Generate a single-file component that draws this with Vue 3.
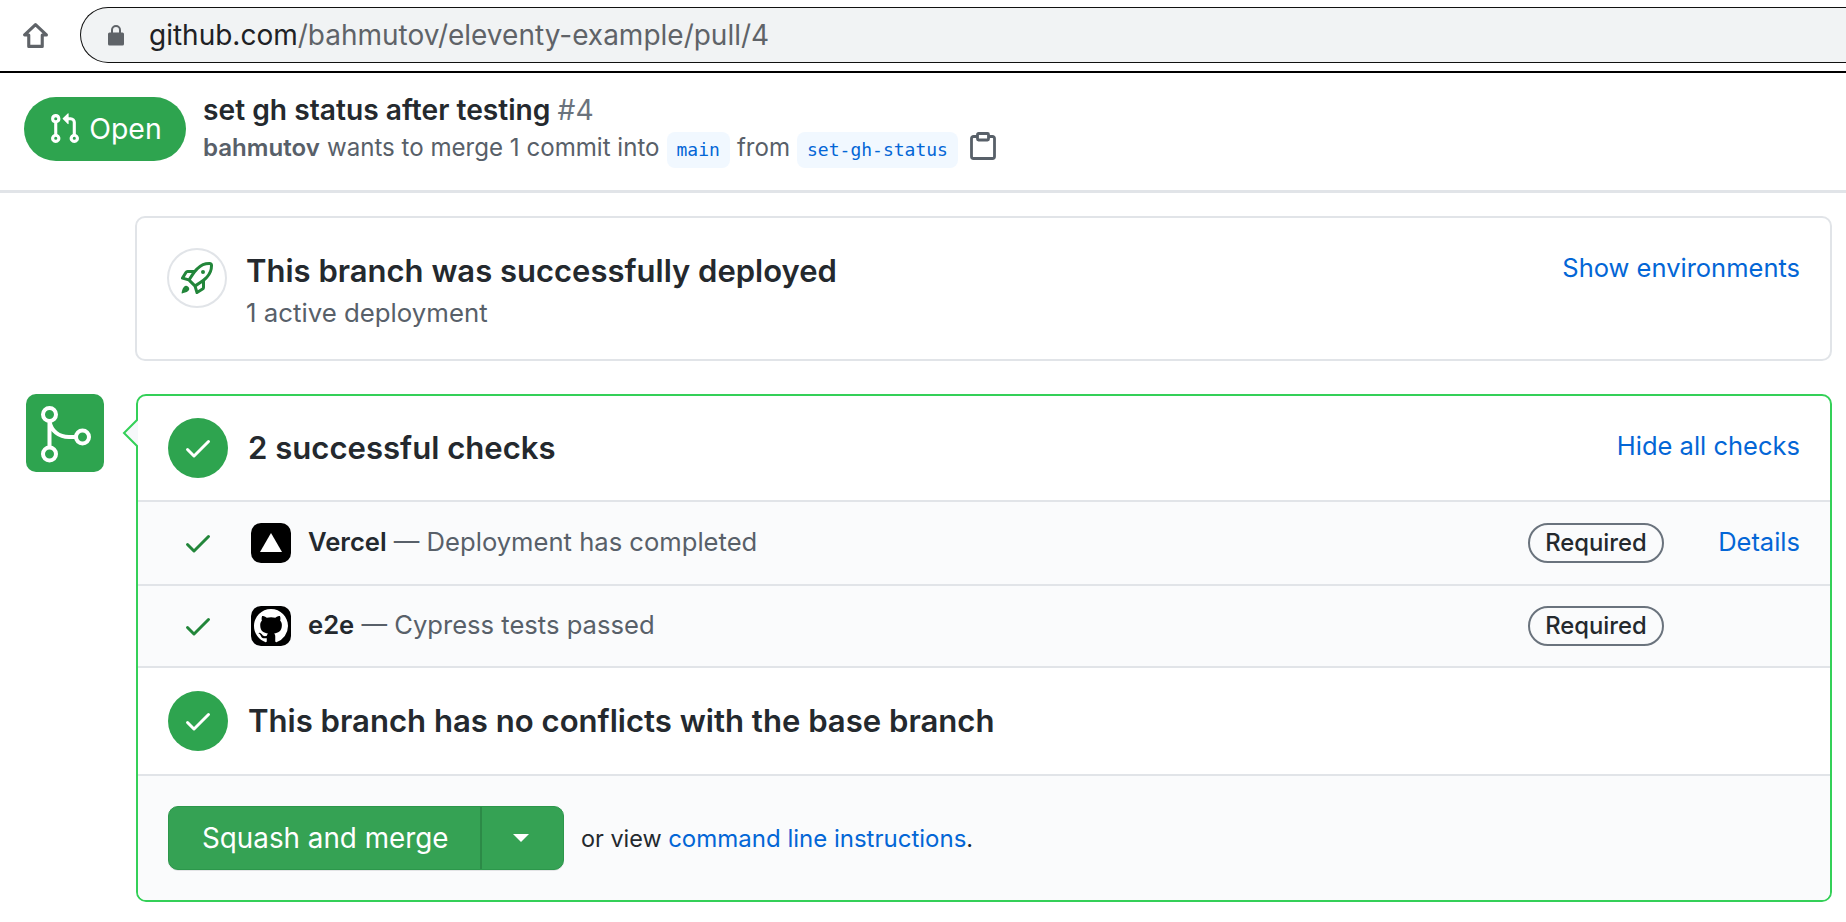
<script setup>
const checkPath = 'M13.78 4.22a.75.75 0 010 1.06l-7.25 7.25a.75.75 0 01-1.06 0L2.22 9.28a.75.75 0 011.06-1.06L6 10.94l6.72-6.72a.75.75 0 011.06 0z'
const githubPath = 'M8 0C3.58 0 0 3.58 0 8c0 3.54 2.29 6.53 5.47 7.59.4.07.55-.17.55-.38 0-.19-.01-.82-.01-1.49-2.01.37-2.53-.49-2.69-.94-.09-.23-.48-.94-.82-1.13-.28-.15-.68-.52-.01-.53.63-.01 1.08.58 1.23.82.72 1.21 1.87.87 2.33.66.07-.52.28-.87.51-1.07-1.78-.2-3.64-.89-3.64-3.95 0-.87.31-1.59.82-2.15-.08-.2-.36-1.02.08-2.12 0 0 .67-.21 2.2.82.64-.18 1.32-.27 2-.27.68 0 1.36.09 2 .27 1.53-1.04 2.2-.82 2.2-.82.44 1.1.16 1.92.08 2.12.51.56.82 1.27.82 2.15 0 3.07-1.87 3.75-3.65 3.95.29.25.54.73.54 1.48 0 1.07-.01 1.93-.01 2.2 0 .21.15.46.55.38A8.013 8.013 0 0016 8c0-4.42-3.58-8-8-8z'

const checks = [
  { id: 'vercel', name: 'Vercel', text: 'Deployment has completed', details: true },
  { id: 'e2e', name: 'e2e', text: 'Cypress tests passed', details: false },
]
</script>

<template>
  <div class="page">
    <div class="toolbar">
      <svg class="home" viewBox="0 0 26 26" fill="none" stroke="#5f6368" stroke-width="3" stroke-linejoin="round">
        <path d="M13 2.500 2.500 12.500H6.500V23.500H19.500V12.500H23.500Z" />
      </svg>
      <div class="url">
        <svg class="lock" viewBox="0 0 18 22" fill="#5f6368">
          <path d="M2.500 8.500H4V6a5 5 0 0 1 10 0v2.500h1.500A1.500 1.500 0 0 1 17 10v10a1.500 1.500 0 0 1-1.500 1.500h-13A1.500 1.500 0 0 1 1 20V10a1.500 1.500 0 0 1 1.500-1.500ZM6 8.500h6V6a3 3 0 0 0-6 0Z" />
        </svg>
        <span class="host">github.com</span><span class="path">/bahmutov/eleventy-example/pull/4</span>
      </div>
    </div>

    <div class="pr-head">
      <div class="state">
        <svg class="state-icon" viewBox="0 0 16 16" fill="#fff" fill-rule="evenodd">
          <path d="M7.177 3.073L9.573.677A.25.25 0 0110 .854v4.792a.25.25 0 01-.427.177L7.177 3.427a.25.25 0 010-.354zM3.750 2.500a.75.75 0 100 1.500.75.75 0 000-1.500zm-2.250.75a2.250 2.250 0 113 2.122v5.256a2.251 2.251 0 11-1.500 0V5.372A2.250 2.250 0 011.500 3.250zM11 2.500h-1V4h1a1 1 0 011 1v5.628a2.251 2.251 0 101.500 0V5A2.500 2.500 0 0011 2.500zm1 10.250a.75.75 0 111.500 0 .75.75 0 01-1.500 0zM3.750 12a.75.75 0 100 1.500.75.75 0 000-1.500z" />
        </svg>
        Open
      </div>
      <div class="pr-text">
        <div class="pr-title">set gh status after testing <span class="pr-num">#4</span></div>
        <div class="pr-sub">
          <strong>bahmutov</strong> wants to merge 1 commit into
          <span class="ref">main</span> from
          <span class="ref">set-gh-status</span>
          <svg class="clip" viewBox="0 0 26 28" fill="none" stroke="#586069" stroke-width="2.800" stroke-linejoin="round">
            <path d="M7 4.500H3.500A2 2 0 0 0 1.500 6.500V24.500A2 2 0 0 0 3.500 26.500H22.500A2 2 0 0 0 24.500 24.500V6.500A2 2 0 0 0 22.500 4.500H19" />
            <rect x="7.500" y="1.500" width="11" height="6.500" rx="1" />
          </svg>
        </div>
      </div>
    </div>

    <div class="deploy">
      <div class="rocket">
        <svg viewBox="0 0 16 16" fill="#22863a" fill-rule="evenodd" width="32" height="32">
          <path d="M14.064 0a8.750 8.750 0 00-6.187 2.563l-.459.458c-.314.314-.616.641-.904.979H3.310a1.750 1.750 0 00-1.490.833L.11 7.607a.75.75 0 00.418 1.110l3.102.954c.037.051.079.1.124.145l2.429 2.428c.046.046.094.088.145.125l.954 3.102a.75.75 0 001.110.418l2.774-1.707a1.750 1.750 0 00.833-1.490V9.485c.338-.288.665-.59.979-.904l.458-.459A8.750 8.750 0 0016 1.936V1.750A1.750 1.750 0 0014.250 0h-.186zM10.500 10.625c-.088.06-.177.118-.266.175l-2.350 1.521.548 1.783 1.949-1.200a.25.25 0 00.119-.213v-2.066zM3.678 8.116L5.200 5.766c.058-.09.117-.178.176-.266H3.309a.25.25 0 00-.213.119l-1.200 1.950 1.782.547zm5.260-4.493A7.250 7.250 0 0114.063 1.500h.186a.25.25 0 01.25.25v.186a7.250 7.250 0 01-2.123 5.127l-.459.458a15.210 15.210 0 01-2.499 2.020l-2.317 1.500-2.143-2.143 1.500-2.317a15.250 15.250 0 012.020-2.500l.458-.458h.002zM12 5a1 1 0 11-2 0 1 1 0 012 0zm-8.440 9.560a1.500 1.500 0 10-2.120-2.120c-.734.730-1.047 2.332-1.150 3.003a.23.23 0 00.265.265c.671-.103 2.273-.416 3.005-1.148z" />
        </svg>
      </div>
      <div class="deploy-text">
        <div class="heading deploy-heading">This branch was successfully deployed</div>
        <div class="deploy-sub">1 active deployment</div>
      </div>
      <a class="link deploy-link">Show environments</a>
    </div>

    <div class="merge">
      <div class="merge-badge">
        <svg viewBox="0 0 78 78" fill="none" stroke="#fff" stroke-width="4" width="78" height="78">
          <circle cx="23.500" cy="20.500" r="6.500" />
          <circle cx="23.500" cy="60" r="6.500" />
          <circle cx="56.500" cy="43" r="6.500" />
          <path d="M23.500 27V53.500M23.500 27C25 37 33 43 43 43H50" />
        </svg>
      </div>
      <div class="box">
        <svg class="pointer" viewBox="0 0 16 30" width="16" height="30">
          <path d="M16 1 2 15 16 29" fill="#f6f8fa" stroke="#34d058" stroke-width="2" />
        </svg>
        <div class="section top">
          <div class="ok">
            <svg viewBox="0 0 16 16" fill="#fff" width="32" height="32"><path :d="checkPath" /></svg>
          </div>
          <div class="heading">2 successful checks</div>
          <a class="link push">Hide all checks</a>
        </div>

        <div v-for="c in checks" :key="c.id" class="row">
          <svg class="row-check" viewBox="0 0 16 16" fill="#22863a" width="32" height="32"><path :d="checkPath" /></svg>
          <div class="avatar">
            <svg v-if="c.id === 'vercel'" viewBox="0 0 40 40" width="40" height="40">
              <path d="M20 10 31 29H9Z" fill="#fff" />
            </svg>
            <svg v-else viewBox="0 0 16 16" width="34" height="34" fill="#fff"><path :d="githubPath" /></svg>
          </div>
          <div class="row-text"><strong>{{ c.name }}</strong> — {{ c.text }}</div>
          <span class="required">Required</span>
          <div class="details">
            <a v-if="c.details" class="link">Details</a>
          </div>
        </div>

        <div class="section conflicts">
          <div class="ok">
            <svg viewBox="0 0 16 16" fill="#fff" width="32" height="32"><path :d="checkPath" /></svg>
          </div>
          <div class="heading">This branch has no conflicts with the base branch</div>
        </div>

        <div class="actions">
          <div class="btn-group">
            <div class="btn-main">Squash and merge</div>
            <div class="btn-caret"><span class="caret"></span></div>
          </div>
          <div class="hint">or view <a class="link">command line instructions</a>.</div>
        </div>
      </div>
    </div>
  </div>
</template>

<style scoped>
.page {
  font-family: Inter, "Open Sans", sans-serif;
  color: #24292e;
  font-size: 24px;
  background: #fff;
  overflow: hidden;
}

.toolbar {
  height: 71px;
  border-bottom: 2px solid #000;
  display: flex;
  align-items: center;
  padding-left: 22px;
}

.home {
  width: 27px;
  height: 27px;
  margin-right: 31px;
}

.url {
  flex: 1;
  height: 56px;
  margin-top: -2px;
  box-sizing: border-box;
  display: flex;
  align-items: center;
  background: #f1f3f4;
  border: 1px solid #111;
  border-right: 0;
  border-radius: 28px 0 0 28px;
  padding-left: 26px;
  font-size: 28px;
}

.lock {
  width: 18px;
  height: 22px;
  margin-right: 24px;
}

.host {
  color: #202124;
}

.path {
  color: #5f6368;
}

.pr-head {
  height: 117px;
  border-bottom: 3px solid #e1e4e8;
  display: flex;
  align-items: center;
  padding-left: 24px;
}

.state {
  width: 162px;
  height: 64px;
  margin-top: -6px;
  border-radius: 32px;
  background: #2ea44f;
  color: #fff;
  font-size: 28.4px;
  display: flex;
  align-items: center;
  justify-content: center;
  gap: 8px;
}

.state-icon {
  width: 33px;
  height: 33px;
}

.pr-text {
  margin-left: 17px;
  margin-top: -4px;
}

.pr-title {
  font-size: 28.2px;
  font-weight: 600;
  line-height: 36px;
}

.pr-num {
  font-weight: 400;
  color: #6a737d;
}

.pr-sub {
  display: flex;
  align-items: center;
  gap: 7px;
  color: #586069;
  font-size: 24.1px;
  line-height: 38px;
  white-space: nowrap;
}

.pr-sub strong {
  font-weight: 600;
}

.ref {
  font-family: "DejaVu Sans Mono", "Liberation Mono", monospace;
  font-size: 18px;
  color: #0366d6;
  background: #f1f8ff;
  border-radius: 8px;
  padding: 0 10px;
  height: 36px;
  line-height: 36px;
  margin-top: 4px;
}

.clip {
  width: 26px;
  height: 28px;
  margin-left: 5px;
  margin-top: -3px;
}

.deploy {
  margin: 23px 14px 0 135px;
  height: 145px;
  box-sizing: border-box;
  border: 2px solid #e1e4e8;
  border-radius: 10px;
  display: flex;
  padding: 30px 30px 0 30px;
}

.rocket {
  width: 60px;
  height: 60px;
  box-sizing: border-box;
  border: 2px solid #e1e4e8;
  border-radius: 50%;
  display: flex;
  align-items: center;
  justify-content: center;
  margin-right: 19px;
}

.heading {
  font-size: 31.1px;
  font-weight: 600;
  line-height: 40px;
}

.deploy-heading {
  font-size: 31px;
}

.deploy-text {
  padding-top: 3px;
}

.deploy-sub {
  color: #586069;
  font-size: 25.8px;
  line-height: 32px;
  margin-top: 6px;
}

.link {
  color: #0366d6;
  font-size: 25.5px;
}

.deploy-link {
  margin-left: auto;
  line-height: 40px;
}

.merge {
  display: flex;
  margin: 33px 14px 0 26px;
}

.merge-badge {
  width: 78px;
  height: 78px;
  flex: none;
  background: #2ea44f;
  border-radius: 10px;
}

.box {
  position: relative;
  flex: 1;
  margin-left: 32px;
  border: 2px solid #34d058;
  border-radius: 10px;
}

.pointer {
  position: absolute;
  left: -16px;
  top: 22px;
}

.section {
  display: flex;
  align-items: center;
  padding: 0 30px;
  box-sizing: border-box;
  border-bottom: 2px solid #e1e4e8;
}

.top {
  height: 106px;
}

.conflicts {
  height: 108px;
}

.ok {
  width: 60px;
  height: 60px;
  background: #2ea44f;
  border-radius: 50%;
  display: flex;
  align-items: center;
  justify-content: center;
  margin-right: 20px;
  flex: none;
}

.push {
  margin-left: auto;
  margin-bottom: 6px;
}

.row {
  height: 82px;
  box-sizing: border-box;
  display: flex;
  align-items: center;
  background: #fafbfc;
  border-bottom: 2px solid #e1e4e8;
  padding: 0 30px 0 47px;
}

.top + .row {
  height: 84px;
}

.row-check {
  margin-right: 37px;
  margin-left: -3px;
}

.avatar {
  width: 40px;
  height: 40px;
  border-radius: 10px;
  background: #000;
  display: flex;
  align-items: center;
  justify-content: center;
  margin-right: 17px;
}

.row-text {
  color: #586069;
  font-size: 25.6px;
  margin-bottom: 3px;
}

.row-text strong {
  color: #24292e;
  font-weight: 600;
}

.required {
  margin-left: auto;
  width: 136px;
  height: 40px;
  box-sizing: border-box;
  border: 2px solid #6a737d;
  border-radius: 20px;
  text-align: center;
  line-height: 36px;
  font-size: 23.8px;
  font-weight: 500;
}

.details {
  width: 136px;
  text-align: right;
  margin-bottom: 3px;
}

.actions {
  height: 124px;
  display: flex;
  align-items: center;
  background: #fafbfc;
  border-radius: 0 0 8px 8px;
  padding-left: 30px;
}

.btn-group {
  display: flex;
  height: 64px;
  box-sizing: border-box;
  border: 1px solid #2c974b;
  border-radius: 10px;
  background: #35a254;
  color: #fff;
  box-shadow: 0 1px 0 rgba(27, 31, 35, 0.1);
}

.btn-main {
  width: 313px;
  font-size: 27.8px;
  line-height: 62px;
  padding-left: 33px;
  box-sizing: border-box;
  border-right: 2px solid #2c8a47;
}

.btn-caret {
  width: 81px;
  padding-right: 3px;
  box-sizing: border-box;
  display: flex;
  align-items: center;
  justify-content: center;
}

.caret {
  border: 8px solid transparent;
  border-top: 8px solid #fff;
  border-bottom: 0;
}

.hint {
  margin-left: 17px;
  font-size: 23.4px;
}

.hint .link {
  font-size: 24px;
}
</style>
